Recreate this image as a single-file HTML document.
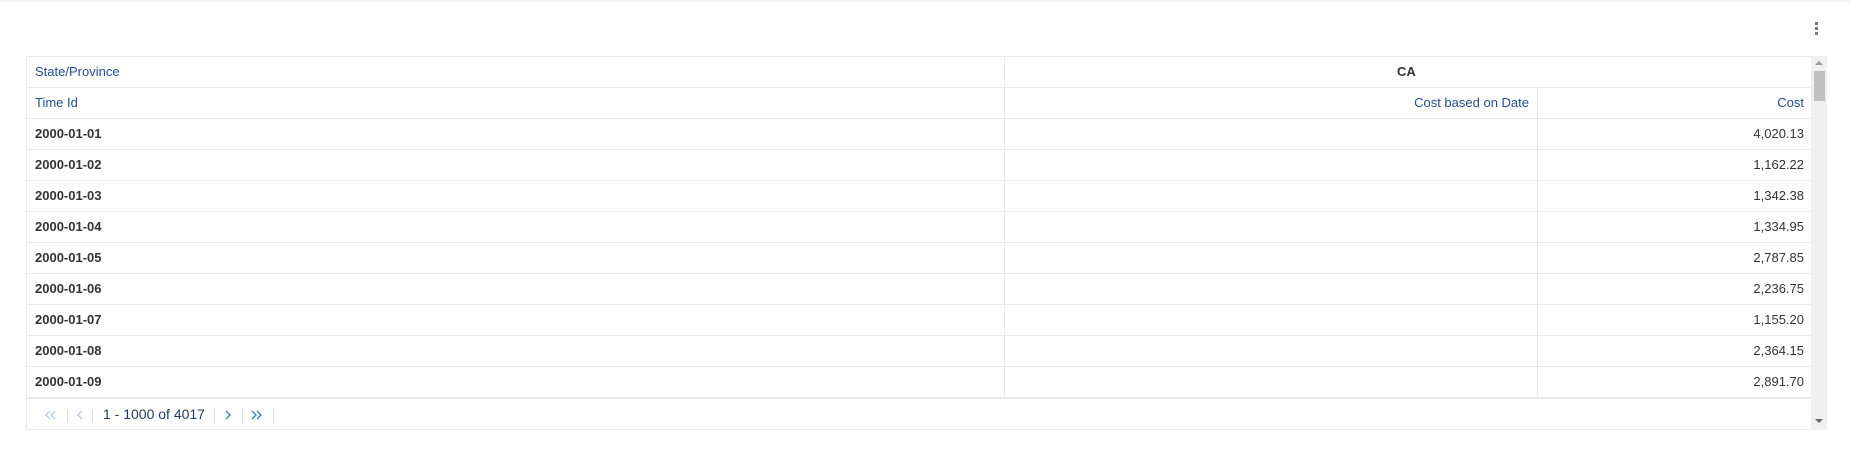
<!DOCTYPE html>
<html><head><meta charset="utf-8"><style>
*{box-sizing:border-box;margin:0;padding:0}
body{width:1853px;height:449px;background:#fff;position:relative;overflow:hidden;font-family:"Liberation Sans",sans-serif;font-size:13px}
.top{position:absolute;left:0;top:0;width:1850px;height:2px;background:#f3f3f5}
.keb{position:absolute;left:1815px;width:2.5px;height:2.5px;background:#777}
.wrap{position:absolute;left:26px;top:56px;width:1801px;height:374px;border:1px solid #e8e8ee;border-right:none}
.row{position:absolute;left:0;width:1785px;height:31px;border-bottom:1px solid #e8e8ee}
.c{position:absolute;top:0;height:30px;line-height:30px;white-space:nowrap}
.h{color:#1f4e8c}
.d{color:#333;font-weight:bold}
.n{color:#333}
.v1{position:absolute;top:0;width:1px;height:30px;background:#e8e8ee}
.sb{position:absolute;left:1811px;top:56px;width:16px;height:374px;background:#f0f0f0}
.pg{position:absolute;left:0;top:340px;width:1785px;height:33px;border-top:2px solid #e8e8ee}
.sep{position:absolute;top:10px;width:1px;height:14px;background:#d8d8d8}
.pi{position:absolute;top:11px}
</style></head><body>
<div class="top"></div>
<div class="keb" style="top:22px"></div><div class="keb" style="top:27px"></div><div class="keb" style="top:32px"></div>
<div class="wrap">
 <div class="row" style="top:0"><div class="c h" style="left:8px">State/Province</div><div class="v1" style="left:977px"></div><div class="c" style="left:1370px;color:#333;font-weight:bold">CA</div></div>
 <div class="row" style="top:31px"><div class="c h" style="left:8px">Time Id</div><div class="v1" style="left:977px"></div><div class="c h" style="right:283px">Cost based on Date</div><div class="v1" style="left:1510px"></div><div class="c h" style="right:8px">Cost</div></div>
 <div class="row" style="top:62px"><div class="c d" style="left:8px">2000-01-01</div><div class="v1" style="left:977px"></div><div class="v1" style="left:1510px"></div><div class="c n" style="right:8px">4,020.13</div></div>
 <div class="row" style="top:93px"><div class="c d" style="left:8px">2000-01-02</div><div class="v1" style="left:977px"></div><div class="v1" style="left:1510px"></div><div class="c n" style="right:8px">1,162.22</div></div>
 <div class="row" style="top:124px"><div class="c d" style="left:8px">2000-01-03</div><div class="v1" style="left:977px"></div><div class="v1" style="left:1510px"></div><div class="c n" style="right:8px">1,342.38</div></div>
 <div class="row" style="top:155px"><div class="c d" style="left:8px">2000-01-04</div><div class="v1" style="left:977px"></div><div class="v1" style="left:1510px"></div><div class="c n" style="right:8px">1,334.95</div></div>
 <div class="row" style="top:186px"><div class="c d" style="left:8px">2000-01-05</div><div class="v1" style="left:977px"></div><div class="v1" style="left:1510px"></div><div class="c n" style="right:8px">2,787.85</div></div>
 <div class="row" style="top:217px"><div class="c d" style="left:8px">2000-01-06</div><div class="v1" style="left:977px"></div><div class="v1" style="left:1510px"></div><div class="c n" style="right:8px">2,236.75</div></div>
 <div class="row" style="top:248px"><div class="c d" style="left:8px">2000-01-07</div><div class="v1" style="left:977px"></div><div class="v1" style="left:1510px"></div><div class="c n" style="right:8px">1,155.20</div></div>
 <div class="row" style="top:279px"><div class="c d" style="left:8px">2000-01-08</div><div class="v1" style="left:977px"></div><div class="v1" style="left:1510px"></div><div class="c n" style="right:8px">2,364.15</div></div>
 <div class="row" style="top:310px;border-bottom:none"><div class="c d" style="left:8px">2000-01-09</div><div class="v1" style="left:977px"></div><div class="v1" style="left:1510px"></div><div class="c n" style="right:8px">2,891.70</div></div>
 <div class="pg">
  <svg class="pi" style="left:18px" width="12" height="10" viewBox="0 0 12 10"><path d="M5 1 L1 5 L5 9 M10 1 L6 5 L10 9" fill="none" stroke="#a9c6e6" stroke-width="1.2"/></svg>
  <div class="sep" style="left:40px"></div>
  <svg class="pi" style="left:50px" width="6" height="10" viewBox="0 0 6 10"><path d="M5 1 L1 5 L5 9" fill="none" stroke="#a9c6e6" stroke-width="1.2"/></svg>
  <div class="sep" style="left:65px"></div>
  <div style="position:absolute;left:76px;top:7px;font-size:14px;color:#1f3a5a">1 - 1000 of 4017</div><div class="sep" style="left:187px"></div>
  <svg class="pi" style="left:198px" width="6" height="10" viewBox="0 0 6 10"><path d="M1 1 L5 5 L1 9" fill="none" stroke="#3b7fc4" stroke-width="1.4"/></svg>
  <div class="sep" style="left:215px"></div>
  <svg class="pi" style="left:224px" width="12" height="10" viewBox="0 0 12 10"><path d="M1 1 L5 5 L1 9 M6 1 L10 5 L6 9" fill="none" stroke="#3b7fc4" stroke-width="1.4"/></svg>
  <div class="sep" style="left:246px"></div>
 </div>
</div>
<div class="sb">
 <div style="position:absolute;left:4px;top:5px;width:0;height:0;border-left:4px solid transparent;border-right:4px solid transparent;border-bottom:4px solid #999"></div>
 <div style="position:absolute;left:3px;top:15px;width:11px;height:30px;background:#c1c1c1"></div>
 <div style="position:absolute;left:4px;top:363px;width:0;height:0;border-left:4px solid transparent;border-right:4px solid transparent;border-top:4px solid #666"></div>
</div>
</body></html>
